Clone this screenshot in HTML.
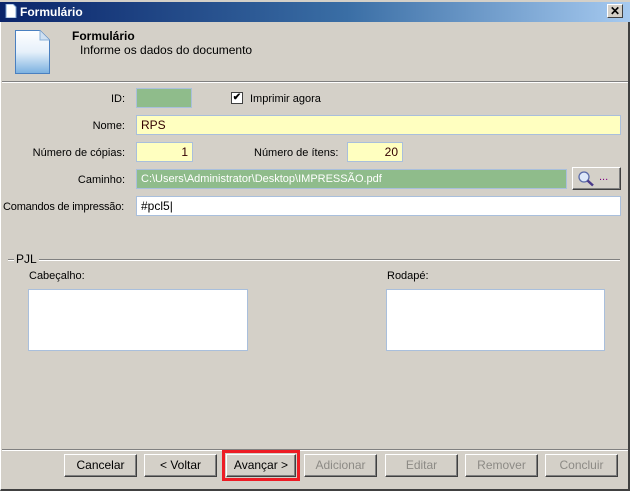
<!DOCTYPE html>
<html><head><meta charset="utf-8"><style>
*{margin:0;padding:0;box-sizing:border-box}
body{width:630px;height:491px;background:#d4d0c8;font-family:"Liberation Sans",sans-serif;font-size:11px;color:#000;position:relative;overflow:hidden}
.a{position:absolute;white-space:nowrap}
.title{left:0;top:0;width:630px;height:22px;background:linear-gradient(90deg,#0a246a,#3a6ea5 55%,#a6caf0);border-top:2px solid #d4d0c8}
.title span{position:absolute;left:20px;top:3px;color:#fff;font-weight:bold;font-size:12px}
.lbl{text-align:right;width:125px;left:0}
.f{border:1px solid #a9bfdc;padding:3px 4px;height:20px;line-height:12px}
.y{background:#ffffc0;color:#300}
.g{background:#8fbc8b;color:#fff}
.w{background:#fff}
.btn{top:454px;height:23px;width:73px;border:1px solid;border-color:#fff #404040 #404040 #fff;box-shadow:inset -1px -1px 0 #808080;text-align:center;line-height:21px;font-size:12px}
.dis{color:#8c8a85}
</style></head><body>
<div class="a" style="left:0;top:0;width:630px;height:491px;border:1px solid #fff;border-right:2px solid #404040;border-bottom:2px solid #404040"></div>
<div class="a title"><svg class="a" style="left:5px;top:2px" width="12" height="14"><path d="M1 0H8L11 3V14H1Z" fill="#fff" stroke="#7aa0d0"/></svg><span>Formulário</span></div>
<div class="a" style="left:607px;top:4px;width:16px;height:14px;background:#d4d0c8;border:1px solid;border-color:#fff #404040 #404040 #fff;text-align:center;font-weight:bold;line-height:12px;font-size:12px">✕</div>
<svg class="a" style="left:14px;top:29px" width="38" height="46"><defs><linearGradient id="d" x1="0" y1="0" x2="0" y2="1"><stop offset="0" stop-color="#fff"/><stop offset=".5" stop-color="#e6f0fa"/><stop offset="1" stop-color="#7ab0e0"/></linearGradient></defs><path d="M1.5 1.5H26L35.5 11V44.5H1.5Z" fill="url(#d)" stroke="#4a80c0"/><path d="M26 1.5V11H35.5" fill="#cfe0f2" stroke="#8ab0d8"/></svg>
<div class="a" style="left:72px;top:29px;font-weight:bold;font-size:12px">Formulário</div>
<div class="a" style="left:80px;top:43px;font-size:12px">Informe os dados do documento</div>
<div class="a" style="left:2px;top:81px;width:626px;border-top:1px solid #808080;border-bottom:1px solid #fff"></div>
<div class="a lbl" style="top:93px">ID:</div>
<div class="a f g" style="left:136px;top:88px;width:56px"></div>
<div class="a" style="left:231px;top:92px;width:12px;height:12px;background:#fff;border:1px solid #404040;font-size:10px;line-height:10px;text-align:center;font-weight:bold">✔</div>
<div class="a" style="left:250px;top:93px">Imprimir agora</div>
<div class="a lbl" style="top:120px">Nome:</div>
<div class="a f y" style="left:136px;top:115px;width:485px;font-size:12px">RPS</div>
<div class="a lbl" style="top:147px">Número de cópias:</div>
<div class="a f y" style="left:136px;top:142px;width:57px;text-align:right;font-size:12px">1</div>
<div class="a" style="left:254px;top:147px">Número de ítens:</div>
<div class="a f y" style="left:347px;top:142px;width:56px;text-align:right;font-size:12px">20</div>
<div class="a lbl" style="top:174px">Caminho:</div>
<div class="a f g" style="left:136px;top:169px;width:431px;font-size:11px">C:\Users\Administrator\Desktop\IMPRESSÃO.pdf</div>
<div class="a" style="left:572px;top:167px;width:49px;height:23px;border:1px solid;border-color:#fff #404040 #404040 #fff;box-shadow:inset -1px -1px 0 #808080"><svg class="a" style="left:4px;top:3px" width="18" height="16"><circle cx="7" cy="6" r="5" fill="#dde8fa" stroke="#5a6aa8" stroke-width="1.3"/><path d="M10.5 9.5L16 14.5" stroke="#4a3a8a" stroke-width="2.5"/></svg><span class="a" style="left:26px;top:3px;color:#800080">...</span></div>
<div class="a lbl" style="top:201px;width:124px;letter-spacing:-0.2px">Comandos de impressão:</div>
<div class="a f w" style="left:136px;top:196px;width:485px;font-size:12px">#pcl5|</div>
<div class="a" style="left:8px;top:259px;width:612px;border-top:1px solid #808080;border-bottom:1px solid #fff"></div>
<div class="a" style="left:14px;top:252px;background:#d4d0c8;padding:0 2px;font-size:12px">PJL</div>
<div class="a" style="left:29px;top:270px">Cabeçalho:</div>
<div class="a f w" style="left:28px;top:289px;width:220px;height:62px"></div>
<div class="a" style="left:387px;top:270px">Rodapé:</div>
<div class="a f w" style="left:386px;top:289px;width:219px;height:62px"></div>
<div class="a" style="left:2px;top:449px;width:626px;border-top:1px solid #808080;border-bottom:1px solid #fff"></div>
<div class="a btn" style="left:64px">Cancelar</div>
<div class="a btn" style="left:144px">&lt; Voltar</div>
<div class="a" style="left:222px;top:450px;width:78px;height:31px;border:3px solid #ed1c24"></div>
<div class="a btn" style="left:226px;width:70px">Avançar &gt;</div>
<div class="a btn dis" style="left:304px">Adicionar</div>
<div class="a btn dis" style="left:385px">Editar</div>
<div class="a btn dis" style="left:465px">Remover</div>
<div class="a btn dis" style="left:545px">Concluir</div>
</body></html>
